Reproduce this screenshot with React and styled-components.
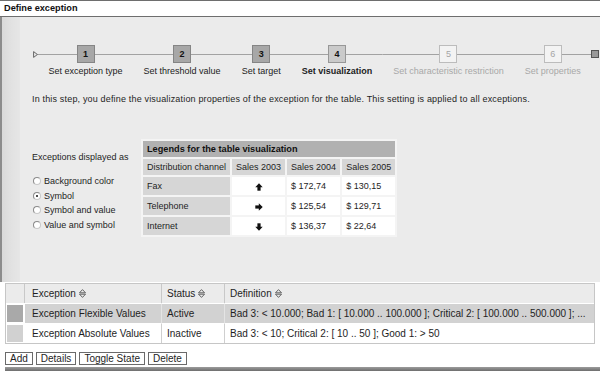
import React from 'react'
import styled, { createGlobalStyle } from 'styled-components'

const GlobalStyle = createGlobalStyle`
  html, body {
    margin: 0;
    padding: 0;
    background: #fff;
  }
  body {
    font-family: 'Liberation Sans', Arial, sans-serif;
    font-size: 9px;
    color: #1e1e1e;
  }
`

const Page = styled.div`
  width: 600px;
  height: 371px;
  overflow: hidden;
  display: flex;
  flex-direction: column;
  background: #fff;
`

const TitleBar = styled.div`
  height: 15px;
  line-height: 15px;
  border-top: 1px solid #6e6e6e;
  border-bottom: 1px solid #6e6e6e;
  padding-left: 4px;
  font-weight: bold;
  font-size: 9.2px;
  color: #111;
`

const Panel = styled.div`
  height: 265px;
  flex: none;
  display: flex;
  background: #ebebeb;
  border-left: 2px solid #8c8c8c;
`

const Stripe = styled.div`
  width: 18px;
  flex: none;
  background: linear-gradient(to right, #d9d9d9, #e2e2e2 55%, #e6e6e6);
`

const PanelBody = styled.div`
  flex: 1;
  min-width: 0;
  padding: 28px 0 0 12px;
  display: flex;
  flex-direction: column;
`

/* roadmap */
const Roadmap = styled.div`
  display: flex;
  align-items: flex-start;
  margin-left: 1px;
`

const Track = styled.div`
  height: 18px;
  display: flex;
  align-items: center;
  justify-content: ${p => p.$align || 'center'};
  background: linear-gradient(#a2a2a2, #a2a2a2) center / 100% 1px no-repeat;
`

const Step = styled.div`
  display: flex;
  flex-direction: column;
`

const boxColors = {
  done: { bg: '#a7a7a7', border: '#858585', color: '#111' },
  current: { bg: '#cacaca', border: '#979797', color: '#111' },
  todo: { bg: '#f3f3f3', border: '#bcbcbc', color: '#a5a5a5' },
}

const StepBox = styled.div`
  width: 16px;
  height: 16px;
  border: 1px solid ${p => boxColors[p.$state].border};
  background: ${p => boxColors[p.$state].bg};
  color: ${p => boxColors[p.$state].color};
  font-weight: ${p => (p.$state === 'todo' ? 'normal' : 'bold')};
  font-size: 9px;
  display: flex;
  align-items: center;
  justify-content: center;
`

const StepLabel = styled.div`
  padding: 0 10.5px;
  margin-top: 3px;
  line-height: 11px;
  white-space: nowrap;
  text-align: center;
  color: ${p => (p.$state === 'todo' ? '#a8a8a8' : '#222')};
  font-weight: ${p => (p.$state === 'current' ? 'bold' : 'normal')};
`

const EndMark = styled.div`
  width: 6px;
  height: 6px;
  border: 1px solid #555;
  background: #9a9a9a;
`

const Intro = styled.p`
  margin: 17px 0 0;
  line-height: 11px;
  letter-spacing: 0.17px;
  white-space: nowrap;
`

/* visualization settings */
const Settings = styled.div`
  display: flex;
  margin-top: 34px;
`

const Options = styled.div`
  width: 109px;
  flex: none;
  padding-top: 13px;
`

const Caption = styled.div`
  line-height: 11px;
`

const RadioList = styled.div`
  margin-top: 11px;
  display: flex;
  flex-direction: column;
`

const RadioRow = styled.label`
  display: flex;
  align-items: center;
  height: 14.6px;
`

const RadioDot = styled.span`
  width: 6px;
  height: 6px;
  margin: 0 3px 0 1px;
  border-radius: 50%;
  border: 1px solid #8a8a8a;
  border-right-color: #c8c8c8;
  border-bottom-color: #c8c8c8;
  background: #fff;
  display: flex;
  align-items: center;
  justify-content: center;
  &::after {
    content: '';
    width: 2px;
    height: 2px;
    border-radius: 50%;
    background: ${p => (p.$checked ? '#111' : 'transparent')};
  }
`

const Legend = styled.table`
  border-collapse: separate;
  border-spacing: 2px;
  background: #f4f4f4;
  font-size: 9px;
`

const LegendTitle = styled.th`
  height: 16px;
  padding: 0 4px;
  background: #b1b1b1;
  text-align: left;
  font-weight: bold;
  font-size: 9.2px;
  color: #111;
`

const LegendHead = styled.th`
  height: 16px;
  padding: 0 4px;
  background: #d6d6d6;
  font-weight: normal;
  text-align: left;
  white-space: nowrap;
  width: ${p => p.$w}px;
  box-sizing: border-box;
`

const LegendCell = styled.td`
  height: 18px;
  padding: 0 4px;
  background: ${p => (p.$key ? '#d6d6d6' : '#fff')};
  text-align: ${p => (p.$center ? 'center' : 'left')};
  white-space: nowrap;
`

const Arrow = ({ dir }) => {
  const rot = { up: 0, right: 90, down: 180 }[dir]
  return (
    <svg width="8" height="8" viewBox="0 0 8 8" style={{ display: 'block', margin: '2px auto 0' }}>
      <g transform={`rotate(${rot} 4 4)`}>
        <polygon points="4,0.3 7.7,4.2 0.3,4.2" fill="#111" />
        <rect x="2.4" y="4" width="3.2" height="3.7" fill="#111" />
      </g>
    </svg>
  )
}

/* exception list */
const Grid = styled.table`
  margin: 1px 5px 0;
  width: 590px;
  flex: none;
  border-collapse: separate;
  border-spacing: 0;
  border: 1px solid #c6c6c6;
  font-size: 10px;
  table-layout: fixed;
`

const HeadCell = styled.th`
  height: 19px;
  padding: 0 0 0 ${p => p.$pad ?? 6}px;
  background: #ebebeb;
  border-right: 1px solid #c8c8c8;
  font-weight: normal;
  text-align: left;
  white-space: nowrap;
  &:last-child { border-right: 0; }
`

const Cell = styled.td`
  height: 18px;
  padding: 0 0 0 ${p => p.$pad ?? 6}px;
  border-top: 1px solid #fff;
  border-right: 1px solid ${p => (p.$sel ? '#e4e4e4' : '#cfcfcf')};
  background: ${p => (p.$sel ? '#d2d2d2' : '#fff')};
  white-space: nowrap;
  overflow: hidden;
  &:last-child { border-right: 0; }
`

const SelectCell = styled.td`
  padding: 1px;
  border-top: 1px solid #fff;
  border-right: 1px solid #fff;
  background: #fff;
`

const SelectMark = styled.div`
  height: 17px;
  background: ${p => (p.$sel ? '#a9a9a9' : '#d1d1d1')};
`

const SortIcon = () => (
  <svg width="7" height="9" viewBox="0 0 7 9" style={{ marginLeft: 3, verticalAlign: '-1px' }}>
    <polygon points="0.5,3.8 3.5,0.6 6.5,3.8" fill="none" stroke="#555" strokeWidth="0.9" />
    <polygon points="0.5,5.2 3.5,8.4 6.5,5.2" fill="none" stroke="#555" strokeWidth="0.9" />
  </svg>
)

const Toolbar = styled.div`
  display: flex;
  gap: 3px;
  margin: 8px 0 0 5px;
`

const Button = styled.button`
  height: 13px;
  padding: 0 4px;
  border: 1px solid #6a6a6a;
  border-radius: 0;
  background: #fff;
  font-family: inherit;
  font-size: 10px;
  line-height: 11px;
  color: #1e1e1e;
`

const BottomBar = styled.div`
  flex: 1;
  margin: 2px 0 0 5px;
  background: linear-gradient(#9c9c9c, #6e6e6e);
`

const steps = [
  { n: 1, label: 'Set exception type', state: 'done' },
  { n: 2, label: 'Set threshold value', state: 'done' },
  { n: 3, label: 'Set target', state: 'done' },
  { n: 4, label: 'Set visualization', state: 'current' },
  { n: 5, label: 'Set characteristic restriction', state: 'todo' },
  { n: 6, label: 'Set properties', state: 'todo' },
]

const displayOptions = [
  { label: 'Background color' },
  { label: 'Symbol', checked: true },
  { label: 'Symbol and value' },
  { label: 'Value and symbol' },
]

const legendRows = [
  { channel: 'Fax', dir: 'up', s04: '$ 172,74', s05: '$ 130,15' },
  { channel: 'Telephone', dir: 'right', s04: '$ 125,54', s05: '$ 129,71' },
  { channel: 'Internet', dir: 'down', s04: '$ 136,37', s05: '$ 22,64' },
]

const exceptions = [
  {
    name: 'Exception Flexible Values',
    status: 'Active',
    def: 'Bad 3: < 10.000; Bad 1: [ 10.000 .. 100.000 ]; Critical 2: [ 100.000 .. 500.000 ]; ...',
    selected: true,
  },
  {
    name: 'Exception Absolute Values',
    status: 'Inactive',
    def: 'Bad 3: < 10; Critical 2: [ 10 .. 50 ]; Good 1: > 50',
  },
]

export default function App() {
  return (
    <Page>
      <GlobalStyle />
      <TitleBar>Define exception</TitleBar>
      <Panel>
        <Stripe />
        <PanelBody>
          <Roadmap>
            <Track $align="flex-start" style={{ width: 5 }}>
              <svg width="5" height="7" viewBox="0 0 5 7" style={{ display: 'block' }}>
                <polygon points="0.6,0.6 4.4,3.5 0.6,6.4" fill="#ebebeb" stroke="#666" strokeWidth="1" />
              </svg>
            </Track>
            {steps.map(s => (
              <Step key={s.n}>
                <Track>
                  <StepBox $state={s.state}>{s.n}</StepBox>
                </Track>
                <StepLabel $state={s.state}>{s.label}</StepLabel>
              </Step>
            ))}
            <Track>
              <EndMark />
            </Track>
          </Roadmap>

          <Intro>
            In this step, you define the visualization properties of the exception for the table. This setting is applied to all exceptions.
          </Intro>

          <Settings>
            <Options>
              <Caption>Exceptions displayed as</Caption>
              <RadioList>
                {displayOptions.map(o => (
                  <RadioRow key={o.label}>
                    <RadioDot $checked={o.checked} />
                    {o.label}
                  </RadioRow>
                ))}
              </RadioList>
            </Options>

            <Legend>
              <thead>
                <tr>
                  <LegendTitle colSpan={4}>Legends for the table visualization</LegendTitle>
                </tr>
                <tr>
                  <LegendHead $w={85}>Distribution channel</LegendHead>
                  <LegendHead $w={53}>Sales 2003</LegendHead>
                  <LegendHead $w={52}>Sales 2004</LegendHead>
                  <LegendHead $w={53}>Sales 2005</LegendHead>
                </tr>
              </thead>
              <tbody>
                {legendRows.map(r => (
                  <tr key={r.channel}>
                    <LegendCell $key>{r.channel}</LegendCell>
                    <LegendCell $center><Arrow dir={r.dir} /></LegendCell>
                    <LegendCell>{r.s04}</LegendCell>
                    <LegendCell>{r.s05}</LegendCell>
                  </tr>
                ))}
              </tbody>
            </Legend>
          </Settings>
        </PanelBody>
      </Panel>

      <Grid>
        <colgroup>
          <col style={{ width: 19 }} />
          <col style={{ width: 137 }} />
          <col style={{ width: 63 }} />
          <col />
        </colgroup>
        <thead>
          <tr>
            <HeadCell $pad={0} />
            <HeadCell $pad={7}>Exception<SortIcon /></HeadCell>
            <HeadCell $pad={5}>Status<SortIcon /></HeadCell>
            <HeadCell $pad={5}>Definition<SortIcon /></HeadCell>
          </tr>
        </thead>
        <tbody>
          {exceptions.map(e => (
            <tr key={e.name}>
              <SelectCell>
                <SelectMark $sel={e.selected} />
              </SelectCell>
              <Cell $sel={e.selected} $pad={7}>{e.name}</Cell>
              <Cell $sel={e.selected} $pad={5}>{e.status}</Cell>
              <Cell $sel={e.selected} $pad={5}>{e.def}</Cell>
            </tr>
          ))}
        </tbody>
      </Grid>

      <Toolbar>
        <Button>Add</Button>
        <Button>Details</Button>
        <Button>Toggle State</Button>
        <Button>Delete</Button>
      </Toolbar>
      <BottomBar />
    </Page>
  )
}
